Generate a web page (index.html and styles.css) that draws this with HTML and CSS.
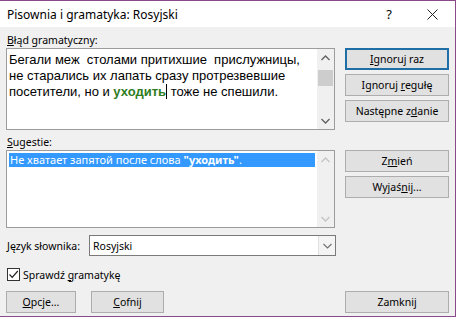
FILE: index.html
```html
<!doctype html>
<html lang="pl">
<head>
	<meta charset="UTF-8">
	<title>Pisownia i gramatyka</title>
	<link rel="stylesheet" href="styles.css">
</head>
<body>
	<div class="dialog">
		<div class="titlebar">
			<span class="title">Pisownia i gramatyka: Rosyjski</span>
			<span class="tb-help">?</span>
			<span class="tb-close">
				<svg width="11" height="11" viewBox="0 0 11 11"><path d="M0.5 0.5 L10.5 10.5 M10.5 0.5 L0.5 10.5" stroke="#222" stroke-width="1" fill="none"/></svg>
			</span>
		</div>
		<div class="content">
			<div class="section">
				<div class="left">
					<div class="label"><u>B</u>łąd gramatyczny:</div>
					<div class="box textbox">
						<div class="text">
							<div class="line">Бегали меж&nbsp; столами притихшие&nbsp; прислужницы,</div>
							<div class="line">не старались их лапать сразу протрезвевшие</div>
							<div class="line"><span>посетители, но и </span><b class="err">уходить</b><span> тоже не спешили.</span></div>
						</div>
						<div class="scrollbar">
							<span class="arrow"><svg width="9" height="6" viewBox="0 0 9 6"><path d="M0.5 5 L4.5 1 L8.5 5" stroke="#606060" stroke-width="1.3" fill="none"/></svg></span>
							<span class="track"><span class="thumb"></span></span>
							<span class="arrow"><svg width="9" height="6" viewBox="0 0 9 6"><path d="M0.5 1 L4.5 5 L8.5 1" stroke="#606060" stroke-width="1.3" fill="none"/></svg></span>
						</div>
					</div>
				</div>
				<div class="right">
					<button class="btn btn-default"><u>I</u>gnoruj raz</button>
					<button class="btn">Ignoruj <u>r</u>egułę</button>
					<button class="btn">Następne z<u>d</u>anie</button>
				</div>
			</div>

			<div class="section section-sug">
				<div class="left">
					<div class="label"><u>S</u>ugestie:</div>
					<div class="box listbox">
						<div class="list">
							<div class="item selected">Не хватает запятой после слова <b>"уходить"</b>.</div>
						</div>
						<div class="scrollbar">
							<span class="arrow"><svg width="9" height="6" viewBox="0 0 9 6"><path d="M0.5 5 L4.5 1 L8.5 5" stroke="#c4c4c4" stroke-width="1.3" fill="none"/></svg></span>
							<span class="track"></span>
							<span class="arrow"><svg width="9" height="6" viewBox="0 0 9 6"><path d="M0.5 1 L4.5 5 L8.5 1" stroke="#c4c4c4" stroke-width="1.3" fill="none"/></svg></span>
						</div>
					</div>
				</div>
				<div class="right">
					<button class="btn">Z<u>m</u>ień</button>
					<button class="btn">Wyjaś<u>n</u>ij...</button>
				</div>
			</div>

			<div class="lang-row">
				<span class="lang-label"><u>J</u>ęzyk słownika:</span>
				<div class="combo">
					<span class="combo-value">Rosyjski</span>
					<span class="combo-btn"><svg width="9" height="6" viewBox="0 0 9 6"><path d="M0.5 1 L4.5 5 L8.5 1" stroke="#707070" stroke-width="1.1" fill="none"/></svg></span>
				</div>
			</div>

			<label class="check-row">
				<span class="checkbox"><svg width="11" height="11" viewBox="0 0 11 11"><path d="M1.5 5.5 L4.2 8.3 L9.8 2" stroke="#222" stroke-width="1.2" fill="none"/></svg></span>
				<span>Sprawdź <u>g</u>ramatykę</span>
			</label>

			<div class="bottom-row">
				<button class="btn btn-opt"><u>O</u>pcje...</button>
				<button class="btn btn-undo"><u>C</u>ofnij</button>
				<button class="btn btn-close">Zamknij</button>
			</div>
		</div>
	</div>
</body>
</html>
```

FILE: styles.css
```css
*{
	margin: 0;
	padding: 0;
	box-sizing: border-box;
}
body{
	background: #fff;
	overflow: hidden;
	font-family: "Noto Sans", "Liberation Sans", sans-serif;
	font-size: 10.5px;
	color: #000;
}
u{
	text-decoration: underline;
	text-underline-offset: 1px;
}
.dialog{
	width: 457px;
	height: 317px;
	margin-left: -1px;
	border: 1px solid #8a4a8a;
	background: #f0f0f0;
	display: flex;
	flex-direction: column;
}
.titlebar{
	height: 26px;
	background: #fff;
	display: flex;
	align-items: center;
	padding-left: 7px;
}
.title{
	flex: 1;
	font-size: 12px;
}
.tb-help{
	width: 20px;
	text-align: center;
	font-size: 13px;
	margin-right: 23px;
}
.tb-close{
	width: 20px;
	display: flex;
	justify-content: center;
	margin-right: 13px;
}
.content{
	padding: 6px 0 0 6px;
}
.section{
	display: flex;
	gap: 10px;
}
.left{
	width: 329px;
}
.label{
	height: 15px;
	line-height: 14px;
	padding-left: 1px;
}
.right{
	display: flex;
	flex-direction: column;
	gap: 4px;
	padding-top: 15px;
}
.btn{
	width: 104px;
	height: 22px;
	background: #e1e1e1;
	border: 1px solid #adadad;
	font-family: inherit;
	font-size: 10.5px;
	color: #000;
}
.btn-default{
	border: 2px solid #1f6ea6;
}
.box{
	background: #fff;
	border: 1px solid #9c9c9c;
	display: flex;
}
.textbox{
	height: 82px;
}
.text{
	flex: 1;
	padding: 3px 0 0 2px;
	font-family: "Liberation Sans", Arial, sans-serif;
	font-size: 13px;
	line-height: 16px;
}
.line{
	height: 16px;
	white-space: pre;
}
.err{
	color: #2f7d1f;
	border-right: 1px solid #000;
}
.scrollbar{
	width: 17px;
	background: #f0f0f0;
	display: flex;
	flex-direction: column;
}
.arrow{
	height: 17px;
	display: flex;
	align-items: center;
	justify-content: center;
}
.track{
	flex: 1;
	padding: 4px 1px 0;
}
.thumb{
	display: block;
	height: 16px;
	background: #cdcdcd;
}
.section-sug{
	margin-top: 5px;
}
.listbox{
	height: 78px;
}
.list{
	flex: 1;
	padding: 2px 2px 0 2px;
}
.item{
	height: 14px;
	line-height: 14px;
	padding-left: 1px;
	font-size: 11px;
	white-space: nowrap;
}
.selected{
	background: #3399ff;
	color: #fff;
}
.lang-row{
	display: flex;
	align-items: center;
	margin-top: 7px;
	height: 21px;
}
.lang-label{
	width: 83px;
	padding-left: 1px;
	white-space: nowrap;
}
.combo{
	width: 247px;
	height: 21px;
	background: #fff;
	border: 1px solid #7a7a7a;
	display: flex;
	align-items: center;
}
.combo-value{
	flex: 1;
	padding-left: 3px;
}
.combo-btn{
	width: 17px;
	height: 19px;
	border-left: 1px solid #e0e0e0;
	background: #f4f4f4;
	display: flex;
	align-items: center;
	justify-content: center;
}
.check-row{
	display: flex;
	align-items: center;
	gap: 3px;
	margin-top: 11px;
	height: 15px;
	padding-left: 1px;
}
.checkbox{
	width: 13px;
	height: 13px;
	border: 1px solid #333;
	background: #fff;
	display: flex;
	align-items: center;
	justify-content: center;
}
.bottom-row{
	display: flex;
	margin-top: 9px;
}
.btn-opt{
	width: 70px;
}
.btn-undo{
	width: 73px;
	margin-left: 15px;
}
.btn-close{
	margin-left: auto;
	margin-right: 6px;
}
```
